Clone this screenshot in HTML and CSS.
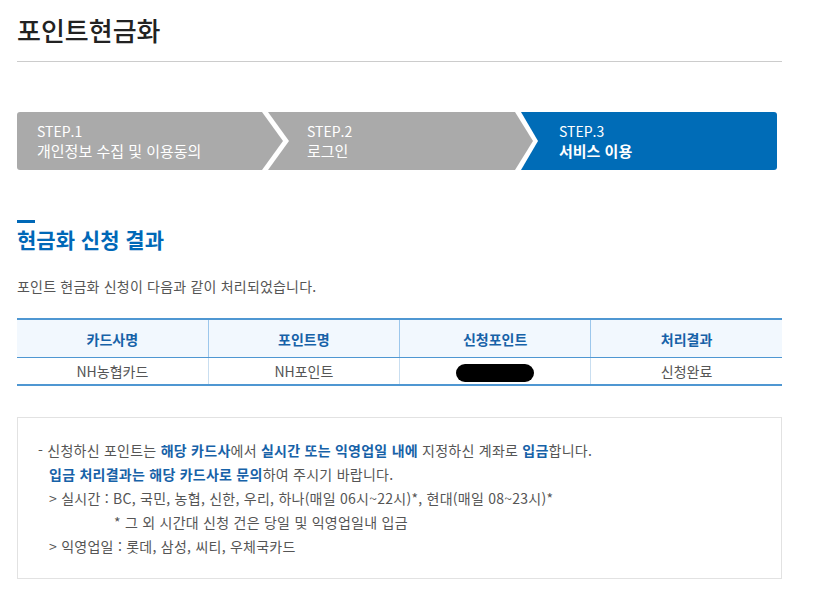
FILE: index.html
```html
<!DOCTYPE html>
<html lang="ko">
<head>
    <meta charset="UTF-8">
    <meta name="viewport" content="width=device-width, initial-scale=1.0">
    <title>포인트현금화</title>
    <link rel="stylesheet" href="styles.css">
</head>
<body>
<div class="page">
    <h1 class="page-title">포인트현금화</h1>

    <ol class="steps">
        <li class="step step-1">
            <span class="step-num">STEP.1</span>
            <span class="step-name">개인정보 수집 및 이용동의</span>
            <svg class="step-arrow" width="30" height="58" viewBox="0 0 30 58">
                <polygon points="0,0 6,0 27,29 6,58 0,58" fill="#fff"/>
                <polygon points="0,0 21,29 0,58" fill="#aaaaaa"/>
            </svg>
        </li>
        <li class="step step-2">
            <span class="step-num">STEP.2</span>
            <span class="step-name">로그인</span>
            <svg class="step-arrow" width="30" height="58" viewBox="0 0 30 58">
                <polygon points="0,0 6,0 23,29 6,58 0,58" fill="#fff"/>
                <polygon points="0,0 18,29 0,58" fill="#aaaaaa"/>
            </svg>
        </li>
        <li class="step step-3 on">
            <span class="step-num">STEP.3</span>
            <span class="step-name">서비스 이용</span>
        </li>
    </ol>

    <h2 class="sec-title">현금화 신청 결과</h2>
    <p class="sec-desc">포인트 현금화 신청이 다음과 같이 처리되었습니다.</p>

    <table class="result">
        <tr>
            <th>카드사명</th>
            <th>포인트명</th>
            <th>신청포인트</th>
            <th>처리결과</th>
        </tr>
        <tr>
            <td>NH농협카드</td>
            <td>NH포인트</td>
            <td><span class="masked"></span></td>
            <td>신청완료</td>
        </tr>
    </table>

    <div class="notice">
        <p class="nt-line"><span class="dash">-</span> 신청하신 포인트는 <b>해당 카드사</b>에서 <b>실시간 또는 익영업일 내에</b> 지정하신 계좌로 <b>입금</b>합니다.</p>
        <p class="nt-line indent"><b>입금 처리결과는 해당 카드사로 문의</b>하여 주시기 바랍니다.</p>
        <p class="nt-line indent">&gt; 실시간 : BC, 국민, 농협, 신한, 우리, 하나(매일 06시~22시)*, 현대(매일 08~23시)*</p>
        <p class="nt-line sub">* 그 외 시간대 신청 건은 당일 및 익영업일내 입금</p>
        <p class="nt-line indent">&gt; 익영업일 : 롯데, 삼성, 씨티, 우체국카드</p>
    </div>
</div>
</body>
</html>
```

FILE: styles.css
```css
body{
    margin:0;
    background:#fff;
    font-family:"Noto Sans CJK KR", "Noto Sans", sans-serif;
    color:#555;
}
.page{
    width:765px;
    padding:12px 0 0 17px;
}
.page-title{
    margin:0;
    padding-bottom:13px;
    border-bottom:1px solid #ccc;
    font-size:26px;
    line-height:36px;
    font-weight:500;
    color:#222;
}

/* 단계 표시 */
.steps{
    display:grid;
    grid-template-columns:245px 253px 1fr;
    width:760px;
    height:58px;
    margin:50px 0 0 0;
    padding:0;
    list-style:none;
    border-radius:3px;
    overflow:hidden;
}
.step{
    position:relative;
    display:flex;
    flex-direction:column;
    justify-content:center;
    background:#aaaaaa;
    color:#fff;
    font-size:15px;
    line-height:20px;
    padding-left:45px;
}
.step-num{
    font-size:14px;
}
.step-1{
    padding-left:20px;
}
.step-3{
    padding-left:44px;
}
.step.on{
    background:#006cb7;
}
.step.on .step-name{
    font-weight:bold;
}
.step-arrow{
    position:absolute;
    top:0;
    left:100%;
    z-index:2;
}

/* 결과 */
.sec-title{
    margin:50px 0 0 0;
    font-size:21px;
    line-height:28px;
    font-weight:bold;
    color:#0068b7;
}
.sec-title::before{
    content:"";
    display:block;
    width:18px;
    height:3px;
    margin-bottom:2px;
    background:#0068b7;
}
.sec-desc{
    margin:23px 0 0 0;
    font-size:14px;
    line-height:20px;
    letter-spacing:0.2px;
}
.result{
    width:765px;
    margin-top:22px;
    border-collapse:collapse;
    table-layout:fixed;
    border-top:2px solid #4f97d2;
    border-bottom:2px solid #4f97d2;
    font-size:14px;
}
.result th{
    height:37px;
    padding:0;
    background:#f2f8fe;
    color:#1762a8;
    font-weight:bold;
    border-left:1px solid #9cc7ec;
    border-bottom:1px solid #4f97d2;
}
.result td{
    height:26px;
    padding:0;
    text-align:center;
    color:#555;
    border-left:1px solid #c9def0;
}
.result th:first-child,
.result td:first-child{
    border-left:none;
}
.masked{
    display:inline-block;
    width:78px;
    height:18px;
    border-radius:9px;
    background:#000;
    vertical-align:middle;
}

/* 안내 */
.notice{
    margin-top:31px;
    padding:20px 20px;
    border:1px solid #e2e2e2;
    font-size:14px;
    line-height:24px;
    letter-spacing:0.25px;
    color:#555;
}
.nt-line{
    margin:0;
}
.nt-line b{
    color:#1762a8;
}
.indent{
    padding-left:11px;
}
.sub{
    padding-left:76px;
}
```
